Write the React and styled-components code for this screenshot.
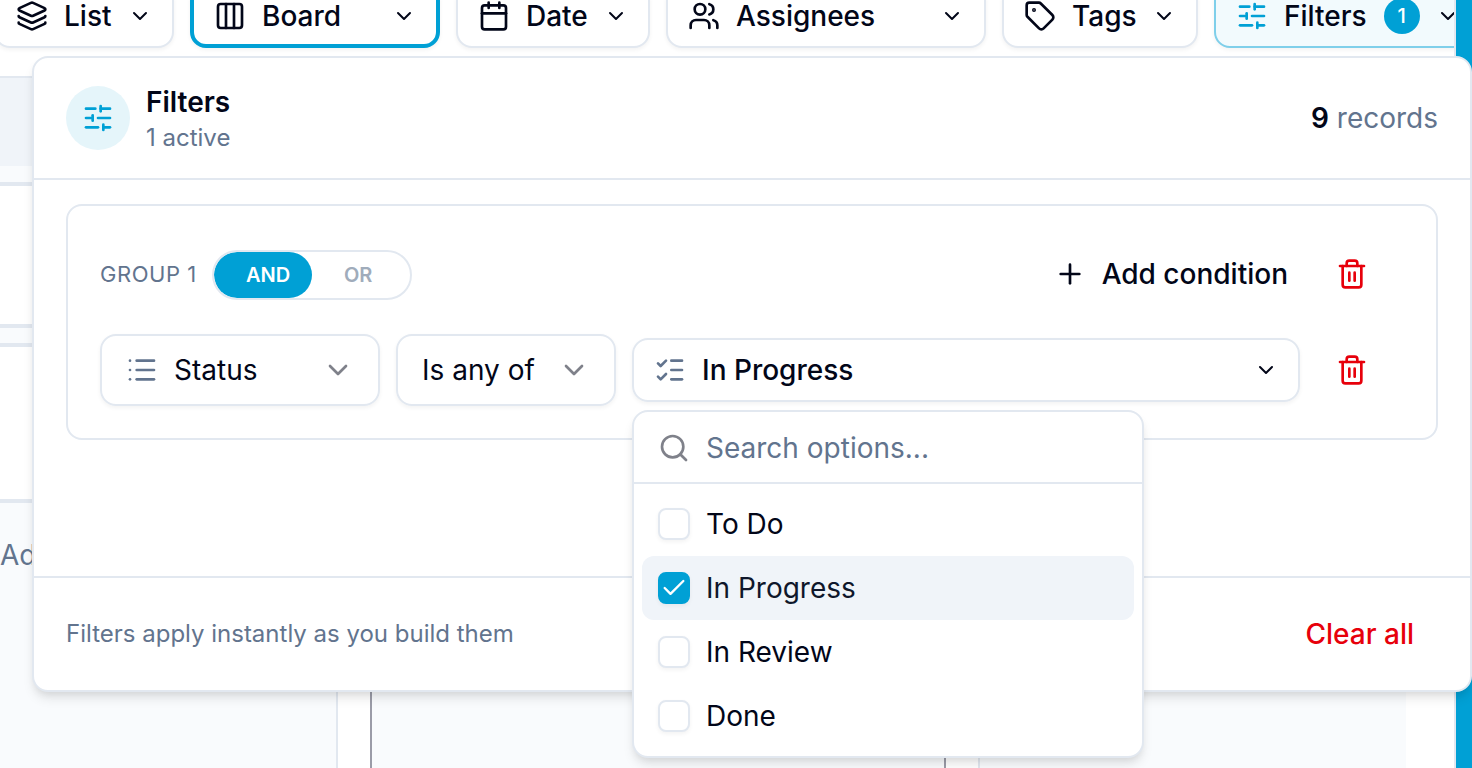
import React from "react";
import styled, { createGlobalStyle } from "styled-components";
import {
  Calendar,
  Check,
  ChevronDown,
  Columns3,
  Layers,
  List,
  ListChecks,
  Plus,
  Search,
  SlidersHorizontal,
  Tag,
  Trash2,
  Users,
} from "lucide-react";

const views = [
  { label: "List", icon: Layers, width: 180 },
  { label: "Board", icon: Columns3, width: 250, active: true },
  { label: "Date", icon: Calendar, width: 194 },
  { label: "Assignees", icon: Users, width: 320 },
  { label: "Tags", icon: Tag, width: 196 },
  { label: "Filters", icon: SlidersHorizontal, width: 268, count: 1 },
];

const options = ["To Do", "In Progress", "In Review", "Done"];
const selected = "In Progress";

const App = () => {
  return (
    <>
      <GlobalStyle />
      <Page>
        <Main>
          <Toolbar>
            {views.map(({ label, icon: Icon, width, active, count }) => {
              return (
                <ViewButton
                  key={label}
                  $width={width}
                  $active={active}
                  $filtered={count > 0}
                >
                  <Icon className="icon" size={32} />
                  <span className="label">{label}</span>
                  {count && <Count>{count}</Count>}
                  <ChevronDown className="chevron" size={24} />
                </ViewButton>
              );
            })}
          </Toolbar>
          <Board>
            <Column $width={338}>
              <ColumnHeader />
              <Card $height={146} />
              <Card $height={160} />
              <AddTask>Add</AddTask>
            </Column>
            <Column $width={576} $over />
            <Column $width={428} $last />
          </Board>
        </Main>
        <Rail />

        <Panel>
          <PanelHeader>
            <RoundIcon>
              <SlidersHorizontal size={32} />
            </RoundIcon>
            <div>
              <h2>Filters</h2>
              <p>1 active</p>
            </div>
            <Records>
              <b>9</b> records
            </Records>
          </PanelHeader>
          <PanelBody>
            <Group>
              <GroupHeader>
                <GroupLabel>GROUP 1</GroupLabel>
                <Toggle>
                  <ToggleItem $on>AND</ToggleItem>
                  <ToggleItem>OR</ToggleItem>
                </Toggle>
                <AddCondition>
                  <Plus size={32} />
                  Add condition
                </AddCondition>
                <DeleteButton aria-label="Delete group">
                  <Trash2 size={32} />
                </DeleteButton>
              </GroupHeader>
              <Condition>
                <Select $width={280}>
                  <List className="icon" size={32} />
                  <span>Status</span>
                  <ChevronDown className="chevron" size={32} />
                </Select>
                <Select $width={220}>
                  <span>Is any of</span>
                  <ChevronDown className="chevron" size={32} />
                </Select>
                <ValueWrap>
                  <ValueButton>
                    <ListChecks className="icon" size={32} />
                    <span>{selected}</span>
                    <ChevronDown className="chevron" size={24} />
                  </ValueButton>
                  <Menu>
                    <SearchRow>
                      <Search size={32} />
                      <span>Search options...</span>
                    </SearchRow>
                    <Options>
                      {options.map((option) => {
                        const on = option === selected;
                        return (
                          <Option key={option} $on={on}>
                            <Checkbox $on={on}>
                              {on && <Check size={28} />}
                            </Checkbox>
                            {option}
                          </Option>
                        );
                      })}
                    </Options>
                  </Menu>
                </ValueWrap>
                <DeleteButton aria-label="Delete condition">
                  <Trash2 size={32} />
                </DeleteButton>
              </Condition>
            </Group>
          </PanelBody>
          <PanelFooter>
            <p>Filters apply instantly as you build them</p>
            <ClearAll>Clear all</ClearAll>
          </PanelFooter>
        </Panel>
      </Page>
    </>
  );
};

export default App;

const GlobalStyle = createGlobalStyle`
  * {
    box-sizing: border-box;
  }
  body {
    margin: 0;
    overflow: hidden;
    background: #ffffff;
    color: #020618;
    font-family: Inter, "Liberation Sans", sans-serif;
    font-size: 28px;
    line-height: 40px;
    -webkit-font-smoothing: antialiased;
  }
  h2, p {
    margin: 0;
  }
  button {
    font: inherit;
    color: inherit;
    background: none;
    border: none;
    padding: 0;
  }
  svg {
    flex-shrink: 0;
  }
`;

const Page = styled.div`
  position: relative;
  display: flex;
  width: 1472px;
  height: 768px;
  overflow: hidden;
`;

const Main = styled.main`
  display: flex;
  flex-direction: column;
  width: 1456px;
  border-right: 2px solid #e2e8f0;
  overflow: hidden;
`;

const Rail = styled.div`
  flex: 1;
  background: #00a0d5;
`;

const Toolbar = styled.div`
  display: flex;
  gap: 16px;
  height: 76px;
  flex-shrink: 0;
  margin-left: -6px;
`;

const ViewButton = styled.button`
  display: flex;
  align-items: center;
  flex-shrink: 0;
  gap: 16px;
  width: ${(props) => props.$width}px;
  height: 64px;
  margin-top: -16px;
  padding: 0 20px;
  font-weight: 500;
  background: ${(props) => (props.$filtered ? "#f2fafd" : "#ffffff")};
  border: ${(props) => (props.$active ? "4px solid #00a0d5" : "2px solid")};
  border-color: ${(props) =>
    props.$active ? "#00a0d5" : props.$filtered ? "#7fcfea" : "#e2e8f0"};
  border-radius: 16px;
  box-shadow: 0 2px 4px rgba(0, 0, 0, 0.05);
  .icon {
    color: ${(props) => (props.$filtered ? "#00a0d5" : "inherit")};
  }
  .label {
    min-width: 0;
    white-space: nowrap;
  }
  .chevron {
    margin-left: auto;
  }
`;

const Count = styled.span`
  display: flex;
  align-items: center;
  justify-content: center;
  flex-shrink: 0;
  width: 36px;
  height: 36px;
  margin-left: 1px;
  border-radius: 50%;
  background: #00a0d5;
  color: #ffffff;
  font-size: 20px;
`;

const Board = styled.div`
  display: flex;
  flex: 1;
  gap: 32px;
`;

const Column = styled.div`
  width: ${(props) => props.$width}px;
  flex-shrink: 0;
  background: #f9fbfd;
  border: 2px solid ${(props) => (props.$over ? "#9b9ca8" : "#e2e8f0")};
  border-left-width: ${(props) => (props.$over || props.$last ? "2px" : 0)};
  border-right-width: ${(props) => (props.$last ? 0 : "2px")};
  border-bottom: none;
`;

const ColumnHeader = styled.div`
  height: 88px;
  margin-bottom: 16px;
  background: #f0f4f9;
`;

const Card = styled.div`
  height: ${(props) => props.$height}px;
  margin-bottom: 15px;
  background: #ffffff;
  border: 4px solid #e2e8f0;
  border-left: none;
  border-right: none;
`;

const AddTask = styled.div`
  margin-top: 32px;
  color: #62748e;
`;

const Panel = styled.section`
  position: absolute;
  top: 56px;
  left: 32px;
  display: flex;
  flex-direction: column;
  width: 1440px;
  height: 636px;
  background: #ffffff;
  border: 2px solid #e2e8f0;
  border-radius: 16px;
  box-shadow: 0 8px 12px -2px rgba(0, 0, 0, 0.1),
    0 4px 8px -4px rgba(0, 0, 0, 0.1);
`;

const PanelHeader = styled.header`
  display: flex;
  align-items: center;
  gap: 16px;
  height: 122px;
  padding: 0 32px;
  border-bottom: 2px solid #e2e8f0;
  h2 {
    font-size: 28px;
    line-height: 40px;
    font-weight: 600;
  }
  p {
    color: #62748e;
    font-size: 24px;
    line-height: 32px;
  }
`;

const RoundIcon = styled.div`
  display: flex;
  align-items: center;
  justify-content: center;
  width: 64px;
  height: 64px;
  border-radius: 50%;
  background: #e5f5fa;
  color: #00a0d5;
`;

const Records = styled.div`
  margin-left: auto;
  color: #62748e;
  b {
    color: #020618;
    font-weight: 600;
  }
`;

const PanelBody = styled.div`
  flex: 1;
  padding: 24px 32px;
`;

const Group = styled.div`
  display: flex;
  flex-direction: column;
  gap: 24px;
  height: 236px;
  padding: 32px 48px 32px 32px;
  border: 2px solid #e2e8f0;
  border-radius: 16px;
`;

const GroupHeader = styled.div`
  display: flex;
  align-items: center;
  height: 72px;
`;

const GroupLabel = styled.span`
  width: 112px;
  color: #62748e;
  font-size: 22px;
  letter-spacing: 0.55px;
  white-space: nowrap;
`;

const Toggle = styled.div`
  display: flex;
  width: 200px;
  height: 50px;
  margin-top: 2px;
  border: 2px solid #e2e8f0;
  border-radius: 25px;
  overflow: hidden;
`;

const ToggleItem = styled.button`
  flex: 1;
  padding-left: 32px;
  text-align: left;
  font-size: 20px;
  font-weight: 600;
  border-radius: 23px;
  background: ${(props) => (props.$on ? "#00a0d5" : "transparent")};
  color: ${(props) => (props.$on ? "#ffffff" : "#a0acbb")};
`;

const AddCondition = styled.button`
  display: flex;
  align-items: center;
  gap: 16px;
  margin-left: auto;
  margin-right: 28px;
  font-weight: 500;
`;

const DeleteButton = styled.button`
  display: flex;
  align-items: center;
  justify-content: center;
  width: 72px;
  height: 72px;
  color: #e7000b;
`;

const Condition = styled.div`
  display: flex;
  align-items: center;
  gap: 16px;
`;

const Select = styled.button`
  display: flex;
  align-items: center;
  gap: 16px;
  width: ${(props) => props.$width}px;
  height: 72px;
  padding: 0 24px;
  border: 2px solid #e2e8f0;
  border-radius: 16px;
  box-shadow: 0 2px 4px rgba(0, 0, 0, 0.05);
  .icon {
    color: #62748e;
  }
  .chevron {
    margin-left: auto;
    opacity: 0.5;
  }
`;

const ValueWrap = styled.div`
  position: relative;
  flex: 1;
`;

const ValueButton = styled.button`
  display: flex;
  align-items: center;
  gap: 16px;
  width: 100%;
  height: 64px;
  padding: 0 20px;
  font-weight: 500;
  border: 2px solid #e2e8f0;
  border-radius: 16px;
  box-shadow: 0 2px 4px rgba(0, 0, 0, 0.05);
  .icon {
    color: #62748e;
  }
  .chevron {
    margin-left: auto;
  }
`;

const Menu = styled.div`
  position: absolute;
  top: 72px;
  left: 0;
  z-index: 2;
  width: 512px;
  background: #ffffff;
  border: 2px solid #e2e8f0;
  border-radius: 16px;
  box-shadow: 0 8px 12px -2px rgba(0, 0, 0, 0.1),
    0 4px 8px -4px rgba(0, 0, 0, 0.1);
`;

const SearchRow = styled.div`
  display: flex;
  align-items: center;
  gap: 16px;
  height: 72px;
  padding: 2px 24px 0;
  color: #62748e;
  border-bottom: 2px solid #e2e8f0;
  svg {
    color: #020618;
    opacity: 0.5;
  }
`;

const Options = styled.div`
  padding: 8px;
`;

const Option = styled.div`
  display: flex;
  align-items: center;
  gap: 16px;
  height: 64px;
  padding: 0 16px;
  border-radius: 12px;
  background: ${(props) => (props.$on ? "#f0f4f9" : "transparent")};
  color: ${(props) => (props.$on ? "#0f172b" : "#020618")};
`;

const Checkbox = styled.span`
  display: flex;
  align-items: center;
  justify-content: center;
  width: 32px;
  height: 32px;
  color: #ffffff;
  background: ${(props) => (props.$on ? "#00a0d5" : "#ffffff")};
  border: 2px solid ${(props) => (props.$on ? "#00a0d5" : "#e2e8f0")};
  border-radius: 8px;
  box-shadow: 0 2px 4px rgba(0, 0, 0, 0.05);
`;

const PanelFooter = styled.footer`
  display: flex;
  align-items: center;
  justify-content: space-between;
  height: 114px;
  padding: 0 32px;
  border-top: 2px solid #e2e8f0;
  p {
    color: #62748e;
    font-size: 24px;
  }
`;

const ClearAll = styled.button`
  padding: 0 24px;
  color: #e7000b;
  font-weight: 500;
`;
